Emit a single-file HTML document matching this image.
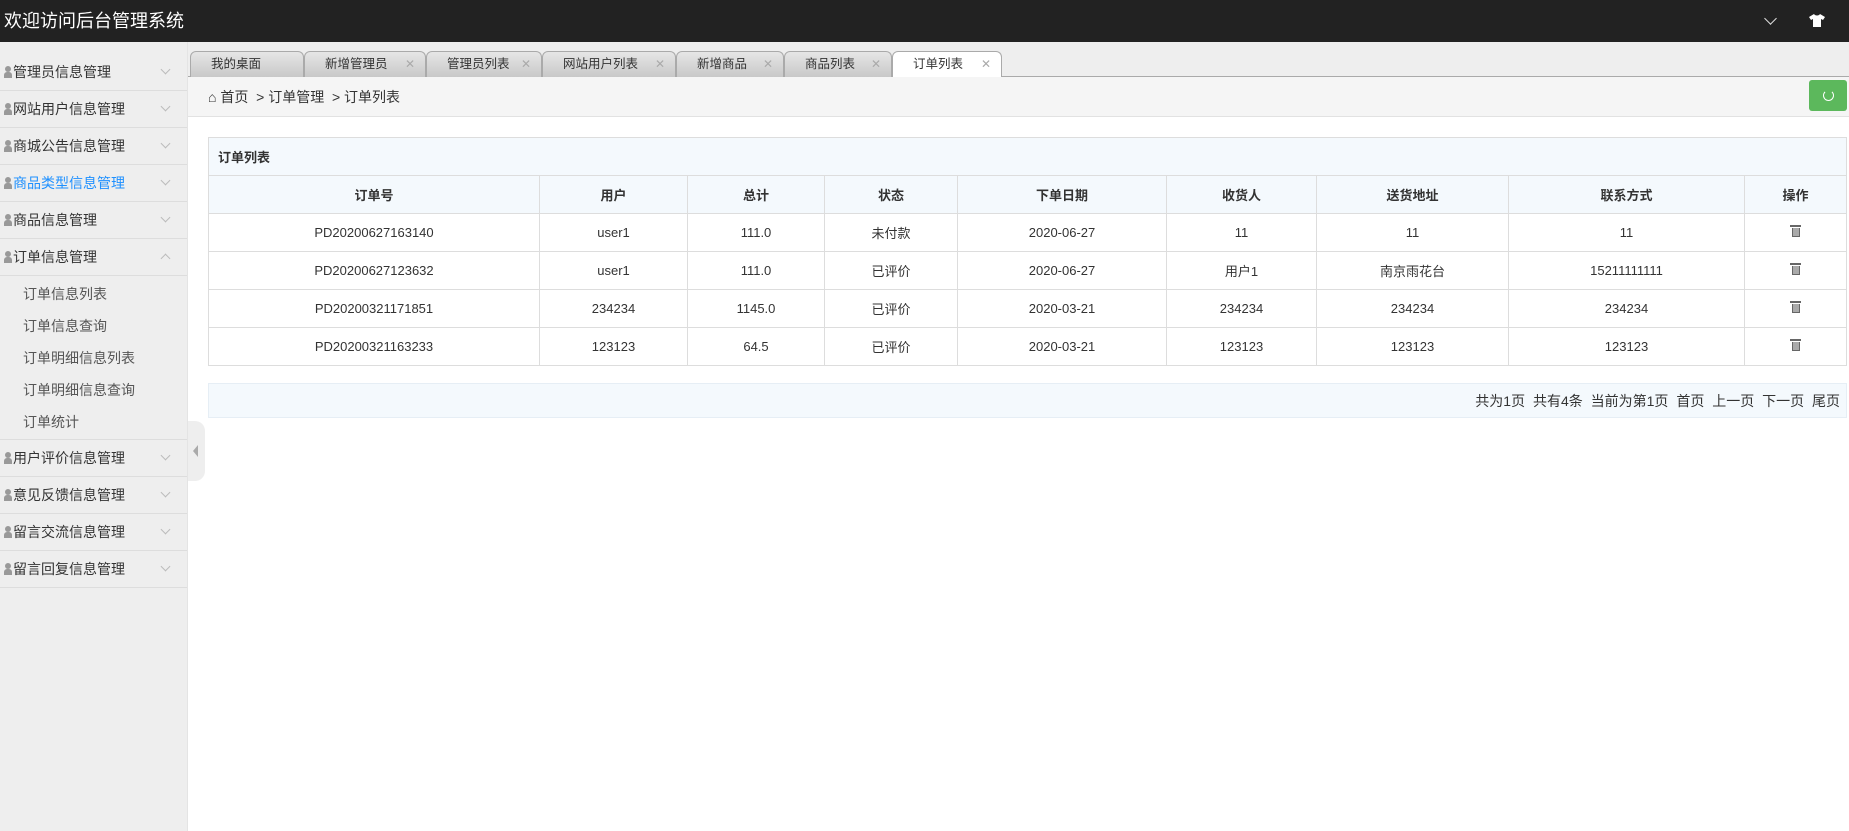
<!DOCTYPE html>
<html><head><meta charset="utf-8"><style>
*{margin:0;padding:0;box-sizing:border-box}
body{width:1849px;height:831px;overflow:hidden;background:#fff;font-family:"Liberation Sans","Noto Sans CJK SC",sans-serif;color:#333;position:relative}
.hd{position:absolute;left:0;top:0;width:1849px;height:42px;background:#222;color:#fff;font-size:18px;line-height:42px;padding-left:4px}
.hd .dd{position:absolute;right:74px;top:14px;width:9px;height:9px;border-right:1.5px solid #ddd;border-bottom:1.5px solid #ddd;transform:rotate(45deg)}
.hd .sh{position:absolute;right:24px;top:14px;width:16px;height:13px}
.sb{position:absolute;left:0;top:42px;width:188px;height:789px;background:#eee;border-right:1px solid #e4e4e4;padding-top:12px}
.it{height:37px;border-bottom:1px solid #ddd;font-size:14px;line-height:36px;padding-left:4px;position:relative;color:#333}
.it i{display:inline-block;width:8px;height:12px;vertical-align:-1px;margin-right:1px;position:relative}
.it i:before{content:"";position:absolute;left:1px;top:0;width:6px;height:6px;border-radius:50%;background:#999}
.it i:after{content:"";position:absolute;left:0;top:6px;width:8px;height:6px;border-radius:3px 3px 0 0;background:#999}
.it b{position:absolute;right:18px;top:12px;width:7px;height:7px;border-right:1px solid #bbb;border-bottom:1px solid #bbb;transform:rotate(45deg)}
.it b.up{top:16px;transform:rotate(-135deg)}
.act{color:#1e90ff}
.sub{height:164px;padding-top:2px;border-bottom:1px solid #ddd}
.sub div{height:32px;line-height:32px;font-size:14px;padding-left:23px;color:#555}
.hdl{position:absolute;left:188px;top:421px;width:17px;height:60px;background:#eee;border-radius:0 10px 10px 0}
.hdl:after{content:"";position:absolute;left:5px;top:24px;border-right:5px solid #aaa;border-top:6px solid transparent;border-bottom:6px solid transparent}
.tabs{position:absolute;left:188px;top:42px;width:1661px;height:35px;background:#eee;border-bottom:1px solid #aaa}
.tab{position:absolute;top:9px;height:26px;border:1px solid #aaa;border-bottom:none;border-radius:6px 6px 0 0;background:linear-gradient(#e6e6e6,#c8c8c8);font-size:12.5px;line-height:25px;padding-left:20px;color:#333}
.tab span{position:absolute;right:10px;color:#aaa;font-size:12px}
.tab.on{background:#fff}
.bc{position:absolute;left:188px;top:77px;width:1661px;height:40px;background:#f5f5f5;border-bottom:1px solid #e2e2e2;font-size:14px;line-height:40px;padding-left:20px}
.rf{position:absolute;right:2px;top:3px;width:38px;height:31px;background:#5cb85c;border-radius:3px}
.rf:after{content:"";position:absolute;left:14px;top:10px;width:9px;height:9px;border:1.5px solid #fff;border-top-color:transparent;border-radius:50%}
table{position:absolute;left:208px;top:137px;width:1639px;border-collapse:collapse;font-size:13px}
td,th{border:1px solid #ddd;text-align:center;height:38px}
th{background:#f4f9fd;font-weight:bold}
.tt th{text-align:left;padding-left:9px;height:38px}
.pg{position:absolute;left:208px;top:383px;width:1639px;height:35px;background:#f4f9fd;border:1px solid #e6eef5;font-size:14px;line-height:34px;text-align:right;padding-right:6px;word-spacing:4px}
.tr{display:inline-block;width:8px;height:9px;border:1.3px solid #666;border-top:none;position:relative;background:#aaa}
.tr:before{content:"";position:absolute;left:-3px;top:-3px;width:11px;height:2px;background:#666}
</style></head><body>
<div class="hd">欢迎访问后台管理系统<div class="dd"></div>
<svg class="sh" viewBox="0 0 16 13"><path d="M5 0L0 3l2 3 2-1v8h8V5l2 1 2-3-5-3c-1 2-5 2-6 0z" fill="#fff"/></svg></div>
<div class="sb">
<div class="it"><i></i>管理员信息管理<b></b></div>
<div class="it"><i></i>网站用户信息管理<b></b></div>
<div class="it"><i></i>商城公告信息管理<b></b></div>
<div class="it act"><i></i>商品类型信息管理<b></b></div>
<div class="it"><i></i>商品信息管理<b></b></div>
<div class="it"><i></i>订单信息管理<b class="up"></b></div>
<div class="sub"><div>订单信息列表</div><div>订单信息查询</div><div>订单明细信息列表</div><div>订单明细信息查询</div><div>订单统计</div></div>
<div class="it"><i></i>用户评价信息管理<b></b></div>
<div class="it"><i></i>意见反馈信息管理<b></b></div>
<div class="it"><i></i>留言交流信息管理<b></b></div>
<div class="it"><i></i>留言回复信息管理<b></b></div>
</div>
<div class="hdl"></div>
<div class="tabs">
<div class="tab" style="left:2px;width:114px">我的桌面</div>
<div class="tab" style="left:116px;width:122px">新增管理员<span>✕</span></div>
<div class="tab" style="left:238px;width:116px">管理员列表<span>✕</span></div>
<div class="tab" style="left:354px;width:134px">网站用户列表<span>✕</span></div>
<div class="tab" style="left:488px;width:108px">新增商品<span>✕</span></div>
<div class="tab" style="left:596px;width:108px">商品列表<span>✕</span></div>
<div class="tab on" style="left:704px;width:110px;height:27px">订单列表<span>✕</span></div>
</div>
<div class="bc">⌂ 首页 &nbsp;&gt; 订单管理 &nbsp;&gt; 订单列表<div class="rf"></div></div>
<table>
<tr class="tt"><th colspan="9">订单列表</th></tr>
<tr><th style="width:331px">订单号</th><th style="width:148px">用户</th><th style="width:137px">总计</th><th style="width:133px">状态</th><th style="width:209px">下单日期</th><th style="width:150px">收货人</th><th style="width:192px">送货地址</th><th style="width:236px">联系方式</th><th>操作</th></tr>
<tr><td>PD20200627163140</td><td>user1</td><td>111.0</td><td>未付款</td><td>2020-06-27</td><td>11</td><td>11</td><td>11</td><td><span class="tr"></span></td></tr>
<tr><td>PD20200627123632</td><td>user1</td><td>111.0</td><td>已评价</td><td>2020-06-27</td><td>用户1</td><td>南京雨花台</td><td>15211111111</td><td><span class="tr"></span></td></tr>
<tr><td>PD20200321171851</td><td>234234</td><td>1145.0</td><td>已评价</td><td>2020-03-21</td><td>234234</td><td>234234</td><td>234234</td><td><span class="tr"></span></td></tr>
<tr><td>PD20200321163233</td><td>123123</td><td>64.5</td><td>已评价</td><td>2020-03-21</td><td>123123</td><td>123123</td><td>123123</td><td><span class="tr"></span></td></tr>
</table>
<div class="pg">共为1页 共有4条 当前为第1页 首页 上一页 下一页 尾页</div>
</body></html>
